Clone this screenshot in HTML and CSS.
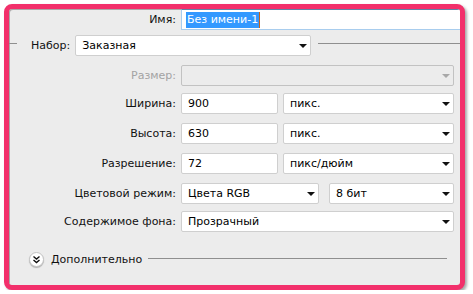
FILE: index.html
```html
<!DOCTYPE html>
<html>
<head>
  <title>Новый документ</title>
  <link rel="stylesheet" href="styles.css">
</head>
<body>
  <div class="dialog">
    <div class="row row-name">
      <div class="label">Имя:</div>
      <div class="field name-field"><span class="selected">Без имени-1</span></div>
    </div>

    <div class="row row-preset">
      <div class="rule rule-left"></div>
      <div class="preset-label">Набор:</div>
      <div class="field select preset-select"><span>Заказная</span><i class="arrow"></i></div>
      <div class="rule rule-right"></div>
    </div>

    <div class="row row-size">
      <div class="label disabled">Размер:</div>
      <div class="field select wide is-disabled"><span></span><i class="arrow"></i></div>
    </div>

    <div class="row row-width">
      <div class="label">Ширина:</div>
      <div class="field input num">900</div>
      <div class="field select unit"><span>пикс.</span><i class="arrow"></i></div>
    </div>

    <div class="row row-height">
      <div class="label">Высота:</div>
      <div class="field input num">630</div>
      <div class="field select unit"><span>пикс.</span><i class="arrow"></i></div>
    </div>

    <div class="row row-res">
      <div class="label">Разрешение:</div>
      <div class="field input num">72</div>
      <div class="field select unit"><span>пикс/дюйм</span><i class="arrow"></i></div>
    </div>

    <div class="row row-mode">
      <div class="label">Цветовой режим:</div>
      <div class="field select mode"><span>Цвета RGB</span><i class="arrow"></i></div>
      <div class="field select depth"><span>8 бит</span><i class="arrow"></i></div>
    </div>

    <div class="row row-bg">
      <div class="label">Содержимое фона:</div>
      <div class="field select wide"><span>Прозрачный</span><i class="arrow"></i></div>
    </div>

    <div class="row row-more">
      <div class="more-btn">
        <svg width="15" height="15" viewBox="0 0 15 15">
          <path d="M4.5 4.5 L7.5 7 L10.5 4.5 M4.5 8 L7.5 10.5 L10.5 8" fill="none" stroke="#111" stroke-width="1.4"/>
        </svg>
      </div>
      <div class="more-label">Дополнительно</div>
      <div class="rule rule-more"></div>
    </div>
  </div>
</body>
</html>
```

FILE: styles.css
```css
body {
  margin: 0;
  background-color: #fff;
  font-family: "DejaVu Sans", sans-serif;
  font-size: 11px;
  color: #111;
}
.dialog {
  box-sizing: border-box;
  width: 461px;
  height: 286px;
  margin: 4px 0 0 4px;
  border: 5px solid #f2306b;
  border-radius: 8px;
  background-color: #ececec;
  box-shadow: 2px 2px 3px rgba(0, 0, 0, 0.35), inset 1px 1px 0 #a9a9a9;
  overflow: hidden;
}
.row {
  display: flex;
  align-items: center;
  height: 21px;
}
.label {
  box-sizing: border-box;
  width: 172px;
  padding-right: 5px;
  text-align: right;
  flex-shrink: 0;
}
.label.disabled {
  color: #a3a3a3;
}
.field {
  box-sizing: border-box;
  height: 21px;
  display: flex;
  align-items: center;
  background-color: #fff;
  border: 1px solid #cfcfcf;
  border-radius: 2px;
  padding-left: 6px;
  color: #000;
  white-space: nowrap;
}
.select .arrow {
  margin-left: auto;
  margin-right: 3px;
  width: 0;
  height: 0;
  border-left: 4px solid transparent;
  border-right: 4px solid transparent;
  border-top: 4px solid #111;
}
.name-field {
  flex: 1;
  border-radius: 0;
  border-color: #a8cdee;
  border-top-color: #5f83a8;
  border-right: none;
  padding-left: 4px;
}
.selected {
  background-color: #3399ff;
  color: #fff;
  padding: 1px 1px 2px 1px;
  border-right: 1px solid #c7631a;
}
.row-preset {
  margin-top: 5px;
}
.rule {
  height: 1px;
  background-color: #8f8f8f;
  align-self: flex-start;
  margin-top: 8px;
}
.rule-left {
  width: 8px;
  margin-right: 14px;
}
.preset-label {
  padding-right: 5px;
}
.preset-select {
  width: 236px;
}
.rule-right {
  flex: 1;
  margin-left: 7px;
}
.row-size {
  margin-top: 9px;
}
.wide {
  width: 273px;
}
.is-disabled {
  background-color: #ececec;
  border-color: #c2c2c2;
}
.is-disabled .arrow {
  border-top-color: #a8a8a8;
}
.row-width {
  margin-top: 7px;
}
.row-height,
.row-res,
.row-mode {
  margin-top: 9px;
}
.row-bg {
  margin-top: 7px;
}
.num {
  width: 97px;
  margin-right: 5px;
}
.unit {
  width: 171px;
}
.mode {
  width: 138px;
  margin-right: 10px;
}
.depth {
  width: 125px;
}
.row-more {
  margin-top: 16px;
  height: 22px;
}
.more-btn {
  box-sizing: border-box;
  width: 15px;
  height: 15px;
  margin-left: 20px;
  border-radius: 50%;
  background-color: #fff;
  border: 1px solid #c4c4c4;
  box-shadow: 0 1px 1px rgba(0, 0, 0, 0.25);
  display: flex;
}
.more-btn svg {
  margin: -1px;
}
.more-label {
  margin-left: 7px;
}
.rule-more {
  align-self: center;
  margin-top: -2px;
  margin-left: 6px;
  width: 299px;
  flex: none;
}
```
